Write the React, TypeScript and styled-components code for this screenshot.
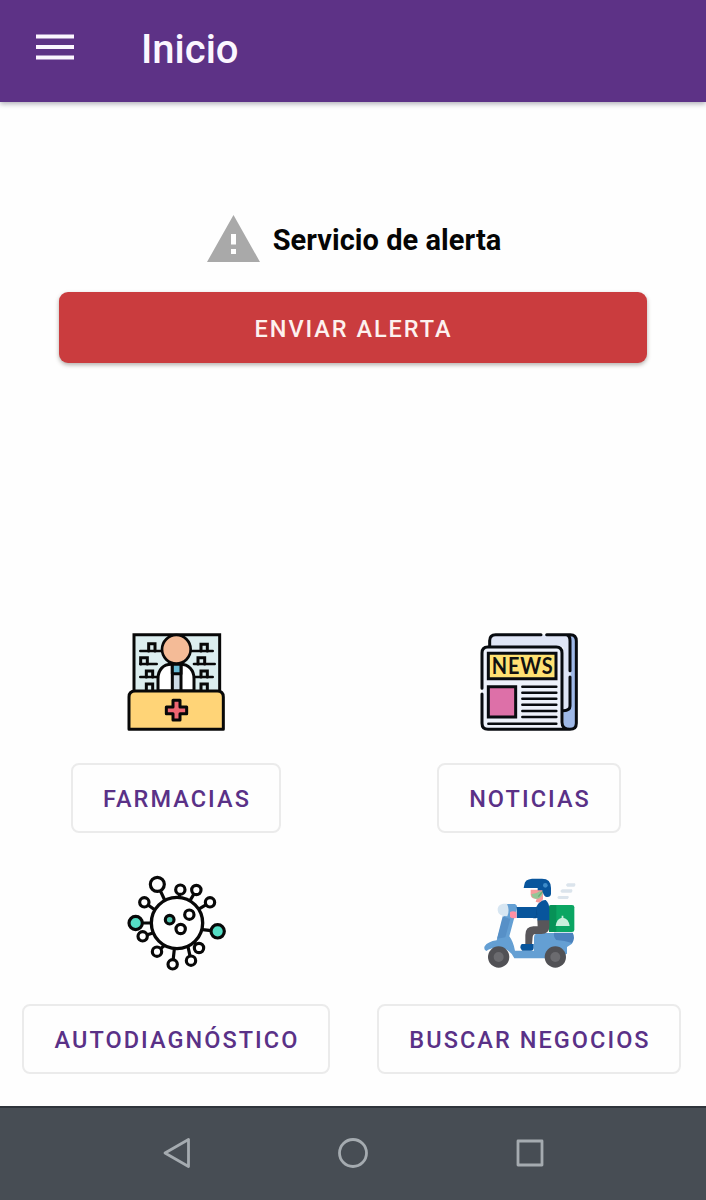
import React from "react";
import styled, { createGlobalStyle } from "styled-components";

const GlobalStyle = createGlobalStyle`
  * { box-sizing: border-box; }
  body { margin: 0; background: #fefefe; font-family: Roboto, "Liberation Sans", sans-serif; }
`;

const Screen = styled.div`
  display: flex;
  flex-direction: column;
  width: 706px;
  height: 1200px;
  background: #fefefe;
  overflow: hidden;
`;

const AppBar = styled.header`
  display: flex;
  align-items: center;
  flex: none;
  height: 102px;
  padding: 0 0 8px 36px;
  gap: 67px;
  background: #5d3286;
  box-shadow: 0 2px 5px rgba(40, 40, 60, 0.36);
`;

const MenuButton = styled.button`
  display: flex;
  padding: 0;
  border: 0;
  background: none;
`;

const Title = styled.h1`
  margin: 6px 0 0;
  font-size: 40px;
  line-height: 46px;
  font-weight: 500;
  color: #fbf6ff;
`;

const Main = styled.main`
  display: flex;
  flex: 1;
  flex-direction: column;
  justify-content: space-between;
  padding: 112px 0 32px;
`;

const AlertSection = styled.section`
  display: flex;
  flex-direction: column;
  gap: 29px;
  padding: 0 59px;
`;

const AlertHeading = styled.div`
  display: flex;
  align-items: center;
  justify-content: center;
  gap: 12px;
  height: 49px;
  padding-left: 2px;
`;

const AlertText = styled.h2`
  margin: 2px 0 0;
  font-size: 29px;
  line-height: 34px;
  font-weight: 700;
  letter-spacing: 0.05px;
  color: #050505;
`;

const AlertButton = styled.button`
  height: 71px;
  padding: 2px 0 0 1px;
  border: 0;
  border-radius: 9px;
  background: #ca3c3e;
  box-shadow: 0 2px 4px rgba(60, 50, 40, 0.38);
  font: 500 23.5px/28px Roboto, sans-serif;
  letter-spacing: 1.95px;
  color: #fdf1ee;
`;

const ServiceGrid = styled.section`
  display: grid;
  grid-template-columns: 352px 354px;
  row-gap: 41px;
`;

const Service = styled.div`
  display: flex;
  flex-direction: column;
  align-items: center;
  gap: 32px;
`;

const ServiceButton = styled.button<{ $width: number }>`
  width: ${(p) => p.$width}px;
  height: 70px;
  padding: 2px 0 0 2px;
  border: 2px solid #ebebeb;
  border-radius: 8px;
  background: #fefefe;
  font: 500 23.5px/28px Roboto, sans-serif;
  letter-spacing: 2.05px;
  white-space: nowrap;
  color: #5a3187;
`;

const NavBar = styled.nav`
  display: grid;
  grid-template-columns: repeat(3, 176.5px);
  justify-content: center;
  justify-items: center;
  align-items: center;
  flex: none;
  height: 94px;
  padding-bottom: 2px;
  border-top: 2px solid #2f343b;
  background: #474d54;
`;

const PharmacyIcon = () => (
  <svg width="98" height="98" viewBox="21 24 294 294" fill="none" stroke="#080808" strokeWidth="9" strokeLinejoin="round" strokeLinecap="round">
    <path d="M42 198V29h257v169" fill="#dceeef" strokeLinejoin="miter" />
    <path d="M61 78h62M61 117h49M61 156h54M216 78h62M222 117h62M223 156h55" strokeWidth="8" />
    <path d="M86 78V56h19v22M62 117V98h20v19M79 156v-18h19v18M79 196v-19h19v19M243 78V58h19v20M234 117V98h20v19M243 156v-18h19v18M243 196v-19h19v19" strokeLinejoin="miter" />
    <path d="M114 198v-37c0-27 16-43 40-43h27c25 0 41 17 41 43v37z" fill="#fff" />
    <path d="M157 118h26v80h-26z" fill="#cddbe5" />
    <path d="M157 118h26v28h-26z" fill="#67bad5" />
    <circle cx="169" cy="73" r="43" fill="#f4bb97" strokeWidth="8" />
    <path d="M27 313V216q0-18 18-18H292q18 0 18 18v97z" fill="#ffd477" />
    <path d="M159 226h21v20h20v20h-20v19h-21v-19h-20v-20h20z" fill="#ef6672" strokeWidth="9" />
  </svg>
);

const NewsIcon = () => (
  <svg width="98" height="98" viewBox="24 24 294 294" fill="none" stroke="#080b10" strokeWidth="9" strokeLinejoin="round" strokeLinecap="round">
    <path d="M53 67V47q0-18 18-18h225v223q-5 5-22 5V67z" fill="#dfe5f6" stroke="none" />
    <path d="M296 29q17 0 17 19v247q0 18-19 18-20 0-20-21v-35q22 0 22-16z" fill="#9eb8e7" stroke="none" />
    <path d="M30 84q0-18 17-18h206q17 0 17 18v208q0 21 21 21H48q-18 0-18-18z" fill="#edf1fb" stroke="none" />
    <path d="M53 65V47q0-18 18-18h136M224 29h71q18 0 18 19v247q0 18-19 18-24 0-24-21V84q0-18-17-18H47q-17 0-17 18v106M30 207v88q0 18 18 18h243M274 257q20 0 20-14V156M294 137V48q0-19-13-19" />
    <path d="M49 85h203v76H49z" fill="#ffe173" strokeLinejoin="miter" />
    <path d="M49 185h82v91H49z" fill="#dd70a8" strokeLinejoin="miter" />
    <path d="M151 185h102M151 203h102M151 221h102M151 239h102M151 258h102M151 276h102M49 296h204" strokeWidth="7.5" />
    <text x="59" y="146" textLength="186" lengthAdjust="spacingAndGlyphs" letterSpacing="3" fontFamily="Lato, sans-serif" fontSize="67" fontWeight="700" fill="#111" stroke="none">NEWS</text>
  </svg>
);

const virusArms: [number, number, number, number, number][] = [
  [112, 49, 21, 134, 96],
  [181, 65, 14, 177, 91],
  [229, 66, 14, 210, 98],
  [270, 103, 14, 235, 124],
  [73, 103, 14, 105, 126],
  [68, 205, 14, 101, 194],
  [111, 251, 14, 134, 232],
  [158, 289, 14, 163, 243],
  [213, 278, 14, 204, 236],
  [237, 240, 14, 221, 221],
];

const VirusIcon = () => (
  <svg width="98" height="98" viewBox="21 18 294 294" overflow="visible" fill="#fff" stroke="#080808" strokeWidth="9.5" strokeLinecap="round">
    {virusArms.map(([cx, cy, r, x, y]) => (
      <g key={`${cx}-${cy}`}>
        <path d={`M${cx} ${cy}L${x} ${y}`} />
        <circle cx={cx} cy={cy} r={r} />
      </g>
    ))}
    <path d="M47 165h47M293 190l-45-5" />
    <circle cx="47" cy="165" r="20" fill="#55dec5" />
    <circle cx="293" cy="190" r="20" fill="#55dec5" />
    <circle cx="171" cy="165" r="77" strokeWidth="10" />
    <circle cx="149" cy="155" r="13" fill="#55c9b4" />
    <circle cx="208" cy="140" r="14" />
    <circle cx="182" cy="183" r="14" />
  </svg>
);

const ScooterIcon = () => (
  <svg width="98" height="98" viewBox="15 18 294 294">
    <path d="M278 46h22q4 5-2 10h-21q-8-5 1-10M262 64h29q4 5-2 10h-29q-8-5 2-10M251 84h29q4 5-2 9h-27q-8-4 0-9" fill="#dbe4ec" />
    <rect x="222" y="111" width="76" height="81" rx="7" fill="#0ba663" />
    <path d="M222 118q0-7 7-7h15v81h-22z" fill="#079257" />
    <path d="M242 174q3-22 18-25v-6h5v6q16 3 19 25z" fill="#c9efdc" />
    <path d="M83 108h37q9 4 5 14L103 205q12 16 17 43h57V209q0-14 16-14h100q5 16-2 32l-15 10v20l-30 14H118q-12-27-40-32-27-3-44 10-9-5-5-14 9-14 36-18l26-88q-13-4-8-16" fill="#649fd3" />
    <path d="M83 145l23 8-15 55-25 4z" fill="#5790c7" />
    <path d="M237 194h56q9 16-2 31-22-8-47-9-9-9-7-22" fill="#4b82bd" />
    <path d="M85 107q-18 2-17 20t29 18q8-18-1-38z" fill="#d7e6f2" />
    <path d="M187 155h36v20q0 23-24 23h-18q-7 0-8 9l-2 23h-20v-29q0-25 24-26h13z" fill="#58565a" />
    <path d="M140 228h36v13q0 7-7 7h-27q-11-9-2-20" fill="#08559c" />
    <path d="M125 117h59q10-22 28-21 11 9 11 28v33h-36v-7h-62z" fill="#08559c" />
    <path d="M184 117v34h-10l13-11z" fill="#074b8b" />
    <path d="M105 132q8-5 19 0l1 17q-13 5-20-2z" fill="#ff8fa4" />
    <path d="M167 65h37v29q-8 14-22 7l3-9q-17 1-18-12z" fill="#f59b9c" />
    <path d="M169 78q13 1 26-9l8 8q-7 18-22 15-10-2-12-14" fill="#92c797" />
    <path d="M190 86l14-17" stroke="#6da777" strokeWidth="4" />
    <path d="M148 50q1-16 23-18h30q27 0 27 28v18q-1 10-13 9-10-1-13-20h-14v-7h-42z" fill="#08559c" />
    <circle cx="211" cy="52" r="7" fill="#3d8bc8" />
    <g fill="#515155">
      <circle cx="71" cy="267" r="32" />
      <circle cx="241" cy="267" r="32" />
    </g>
    <g fill="#6b6b6f">
      <circle cx="71" cy="267" r="15" />
      <circle cx="241" cy="267" r="15" />
    </g>
  </svg>
);

const services = [
  { label: "FARMACIAS", width: 210, Icon: PharmacyIcon },
  { label: "NOTICIAS", width: 184, Icon: NewsIcon },
  { label: "AUTODIAGNÓSTICO", width: 308, Icon: VirusIcon },
  { label: "BUSCAR NEGOCIOS", width: 304, Icon: ScooterIcon },
];

export default function App() {
  return (
    <Screen>
      <GlobalStyle />
      <AppBar>
        <MenuButton aria-label="Menú">
          <svg width="38" height="27" viewBox="0 0 38 27" fill="#fbf6ff">
            <path d="M0 0.500h38v4H0zM0 11h38v4H0zM0 21.500h38v4H0z" />
          </svg>
        </MenuButton>
        <Title>Inicio</Title>
      </AppBar>
      <Main>
        <AlertSection>
          <AlertHeading>
            <svg width="54" height="47" viewBox="0 0 54 47">
              <path d="M26.500 0L53 47H0zM24 19v10.500h5V19zM24 34v5h5v-5z" fill="#a9a9a9" fillRule="evenodd" />
            </svg>
            <AlertText>Servicio de alerta</AlertText>
          </AlertHeading>
          <AlertButton>ENVIAR ALERTA</AlertButton>
        </AlertSection>
        <ServiceGrid>
          {services.map(({ label, width, Icon }) => (
            <Service key={label}>
              <Icon />
              <ServiceButton $width={width}>{label}</ServiceButton>
            </Service>
          ))}
        </ServiceGrid>
      </Main>
      <NavBar>
        <svg width="30" height="32" viewBox="1 0 30 32" fill="none" stroke="#a5abb0" strokeWidth="2.800" strokeLinejoin="round">
          <path d="M27.500 2.500V29.500L4 16z" />
        </svg>
        <svg width="32" height="32" viewBox="0 0 32 32" fill="none" stroke="#a5abb0" strokeWidth="2.800">
          <circle cx="16" cy="16" r="13.500" />
        </svg>
        <svg width="28" height="28" viewBox="0 0 28 28" fill="none" stroke="#a5abb0" strokeWidth="2.800" strokeLinejoin="round">
          <path d="M2 2h24v24H2z" />
        </svg>
      </NavBar>
    </Screen>
  );
}
